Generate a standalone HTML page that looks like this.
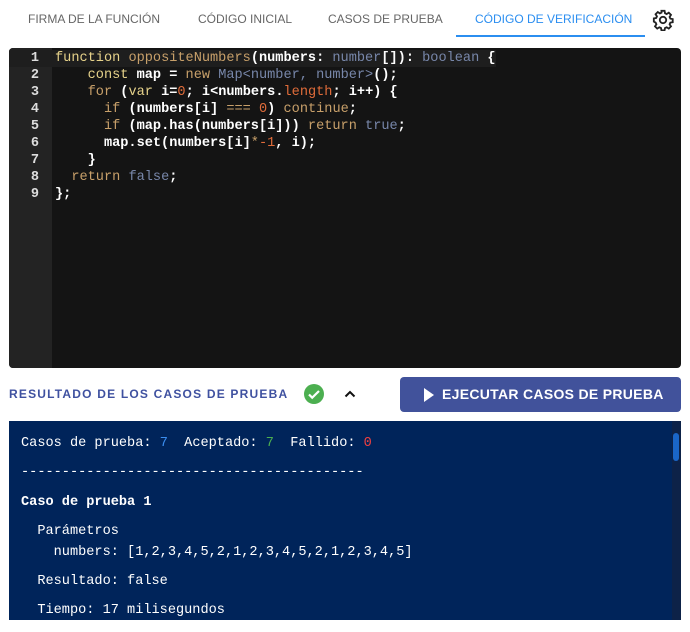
<!DOCTYPE html>
<html><head><meta charset="utf-8"><style>
*{margin:0;padding:0;box-sizing:border-box}
body{width:690px;height:632px;background:#fff;position:relative;overflow:hidden;font-family:"Liberation Sans",sans-serif}
.tab{position:absolute;top:12px;font-size:12px;color:#666;white-space:nowrap}
.ed{position:absolute;left:9px;top:48px;width:672px;height:320px;background:#141414;border-radius:4px;overflow:hidden}
.gut{position:absolute;left:0;top:0;width:43px;height:100%;background:#232323}
.code{position:absolute;left:0;top:2px;font-family:"Liberation Mono",monospace;font-size:13.6px;line-height:17px;color:#fff;white-space:pre;font-weight:bold}
.code span{font-weight:normal}
.ln{display:inline-block;width:30px;text-align:right;color:#ddd;margin-right:16px}
.code .ln{font-weight:bold}
.hl{background:#1e1e1e}
.k{color:#e6d28a}.f{color:#c8a06a}.t{color:#7887aa}.n{color:#e06c3a}
.res{position:absolute;left:9px;top:421px;width:672px;height:199px;background:#00245a;font-family:"Liberation Mono",monospace;font-size:13.6px;color:#fff;white-space:pre}
.res div{position:absolute;left:12px}
</style></head><body>
<div class="tab" style="left:28px">FIRMA DE LA FUNCIÓN</div>
<div class="tab" style="left:198px">CÓDIGO INICIAL</div>
<div class="tab" style="left:328px">CASOS DE PRUEBA</div>
<div class="tab" style="left:475px;color:#2b8ef0">CÓDIGO DE VERIFICACIÓN</div>
<div style="position:absolute;left:456px;top:35px;width:189px;height:2px;background:#2b8ef0"></div>
<svg style="position:absolute;left:652px;top:9px" width="22" height="22" viewBox="0 0 24 24"><path fill="none" stroke="#222" stroke-width="2" d="M10.3 2h3.4l.5 2.6 1.8.9 2.3-1.5 2.4 2.4-1.5 2.3.8 1.8 2.6.5v3.4l-2.6.5-.8 1.8 1.5 2.3-2.4 2.4-2.3-1.5-1.8.8-.5 2.6h-3.4l-.5-2.6-1.8-.8-2.3 1.5-2.4-2.4 1.5-2.3-.8-1.8L2 13.7v-3.4l2.6-.5.8-1.8-1.5-2.3 2.4-2.4 2.3 1.5 1.8-.9z"/><circle cx="12" cy="12" r="3.5" fill="none" stroke="#222" stroke-width="2"/></svg>
<div class="ed"><div class="gut"></div>
<div class="code"><div class="hl"><span class="ln">1</span><span class="k">function</span> <span class="f">oppositeNumbers</span>(numbers: <span class="t">number</span>[]): <span class="t">boolean</span> {</div><div><span class="ln">2</span>    <span class="k">const</span> map = <span class="f">new</span> <span class="t">Map&lt;number, number&gt;</span>();</div><div><span class="ln">3</span>    <span class="f">for</span> (<span class="k">var</span> i=<span class="n">0</span>; i&lt;numbers.<span class="n">length</span>; i++) {</div><div><span class="ln">4</span>      <span class="f">if</span> (numbers[i] <span class="f">===</span> <span class="n">0</span>) <span class="f">continue</span>;</div><div><span class="ln">5</span>      <span class="f">if</span> (map.has(numbers[i])) <span class="f">return</span> <span class="t">true</span>;</div><div><span class="ln">6</span>      map.set(numbers[i]<span class="f">*</span><span class="n">-1</span>, i);</div><div><span class="ln">7</span>    }</div><div><span class="ln">8</span>  <span class="f">return</span> <span class="t">false</span>;</div><div><span class="ln">9</span>};</div></div></div>
<div style="position:absolute;left:9px;top:387px;font-size:12px;font-weight:bold;letter-spacing:1.2px;color:#3f51a0">RESULTADO DE LOS CASOS DE PRUEBA</div>
<svg style="position:absolute;left:304px;top:384px" width="20" height="20" viewBox="0 0 20 20"><circle cx="10" cy="10" r="10" fill="#4caf50"/><path d="M5 10.5l3.2 3.2L15 7" fill="none" stroke="#fff" stroke-width="2.2"/></svg>
<svg style="position:absolute;left:344px;top:389px" width="12" height="10" viewBox="0 0 12 10"><path d="M1.5 7.5L6 3l4.5 4.5" fill="none" stroke="#111" stroke-width="2"/></svg>
<div style="position:absolute;left:400px;top:377px;width:281px;height:35px;background:#41529b;border-radius:4px;color:#fff;font-weight:bold;font-size:14px;letter-spacing:0.3px;line-height:35px;padding-left:42px">EJECUTAR CASOS DE PRUEBA</div>
<svg style="position:absolute;left:423px;top:387px" width="12" height="16" viewBox="0 0 12 16"><path d="M1 1l10 7-10 7z" fill="#fff"/></svg>
<div class="res">
<div style="top:15px">Casos de prueba: <span style="color:#3b8ef0">7</span>  Aceptado: <span style="color:#4caf50">7</span>  Fallido: <span style="color:#f04040">0</span></div>
<div style="top:44px">------------------------------------------</div>
<div style="top:74px;font-weight:bold">Caso de prueba 1</div>
<div style="top:103px">  Parámetros</div>
<div style="top:124px">    numbers: [1,2,3,4,5,2,1,2,3,4,5,2,1,2,3,4,5]</div>
<div style="top:153px">  Resultado: false</div>
<div style="top:182px">  Tiempo: 17 milisegundos</div>
<div style="left:663px;top:0;width:9px;height:199px;background:#0d2248"></div>
<div style="left:664px;top:12px;width:6px;height:28px;background:#1a66c8;border-radius:3px"></div>
</div>
</body></html>
